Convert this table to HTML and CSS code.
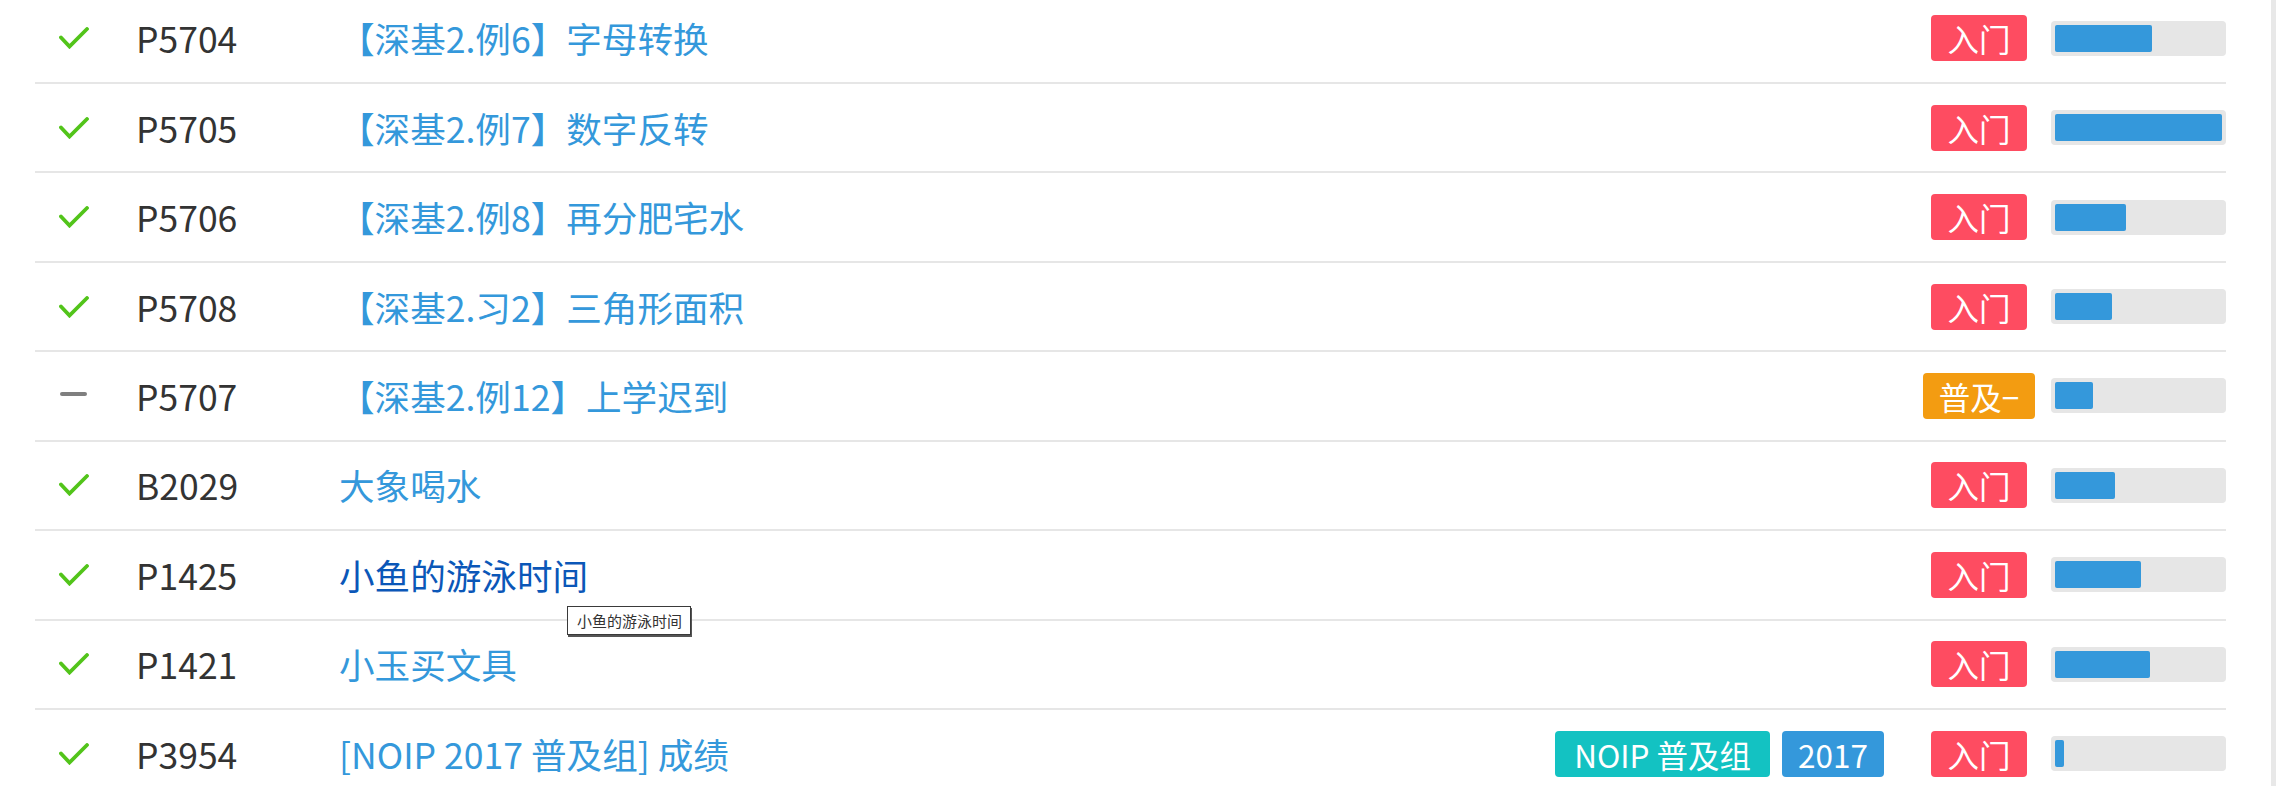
FILE: index.html
```html
<!DOCTYPE html>
<html lang="zh-CN">
<head>
<meta charset="utf-8">
<title>题目列表</title>
<link rel="stylesheet" href="styles.css">
</head>
<body>
<div class="page">
  <div class="list">
    <div class="row">
      <div class="status"><svg class="ok" viewBox="0 0 30 22"><polyline points="2,10.5 10.5,19.5 28,2"/></svg></div>
      <div class="pid">P5704</div>
      <div class="title"><a>【深基2.例6】字母转换</a></div>
      <div class="diff"><span class="badge red">入门</span></div>
      <div class="prog"><div class="fill" style="width:97px"></div></div>
    </div>
    <div class="row">
      <div class="status"><svg class="ok" viewBox="0 0 30 22"><polyline points="2,10.5 10.5,19.5 28,2"/></svg></div>
      <div class="pid">P5705</div>
      <div class="title"><a>【深基2.例7】数字反转</a></div>
      <div class="diff"><span class="badge red">入门</span></div>
      <div class="prog"><div class="fill" style="width:167px"></div></div>
    </div>
    <div class="row">
      <div class="status"><svg class="ok" viewBox="0 0 30 22"><polyline points="2,10.5 10.5,19.5 28,2"/></svg></div>
      <div class="pid">P5706</div>
      <div class="title"><a>【深基2.例8】再分肥宅水</a></div>
      <div class="diff"><span class="badge red">入门</span></div>
      <div class="prog"><div class="fill" style="width:71px"></div></div>
    </div>
    <div class="row">
      <div class="status"><svg class="ok" viewBox="0 0 30 22"><polyline points="2,10.5 10.5,19.5 28,2"/></svg></div>
      <div class="pid">P5708</div>
      <div class="title"><a>【深基2.习2】三角形面积</a></div>
      <div class="diff"><span class="badge red">入门</span></div>
      <div class="prog"><div class="fill" style="width:57px"></div></div>
    </div>
    <div class="row">
      <div class="status"><span class="dash"></span></div>
      <div class="pid">P5707</div>
      <div class="title"><a>【深基2.例12】上学迟到</a></div>
      <div class="diff"><span class="badge orange">普及−</span></div>
      <div class="prog"><div class="fill" style="width:38px"></div></div>
    </div>
    <div class="row">
      <div class="status"><svg class="ok" viewBox="0 0 30 22"><polyline points="2,10.5 10.5,19.5 28,2"/></svg></div>
      <div class="pid">B2029</div>
      <div class="title"><a>大象喝水</a></div>
      <div class="diff"><span class="badge red">入门</span></div>
      <div class="prog"><div class="fill" style="width:60px"></div></div>
    </div>
    <div class="row">
      <div class="status"><svg class="ok" viewBox="0 0 30 22"><polyline points="2,10.5 10.5,19.5 28,2"/></svg></div>
      <div class="pid">P1425</div>
      <div class="title"><a class="hover">小鱼的游泳时间</a></div>
      <div class="diff"><span class="badge red">入门</span></div>
      <div class="prog"><div class="fill" style="width:86px"></div></div>
    </div>
    <div class="row">
      <div class="status"><svg class="ok" viewBox="0 0 30 22"><polyline points="2,10.5 10.5,19.5 28,2"/></svg></div>
      <div class="pid">P1421</div>
      <div class="title"><a>小玉买文具</a></div>
      <div class="diff"><span class="badge red">入门</span></div>
      <div class="prog"><div class="fill" style="width:95px"></div></div>
    </div>
    <div class="row">
      <div class="status"><svg class="ok" viewBox="0 0 30 22"><polyline points="2,10.5 10.5,19.5 28,2"/></svg></div>
      <div class="pid">P3954</div>
      <div class="title"><a>[NOIP 2017 普及组] 成绩</a></div>
      <div class="tags"><span class="badge teal">NOIP 普及组</span><span class="badge blue">2017</span></div>
      <div class="diff"><span class="badge red">入门</span></div>
      <div class="prog"><div class="fill" style="width:9px"></div></div>
    </div>
  </div>
  <div class="gap"></div>
  <div class="edge"></div>
</div>
<div class="tooltip">小鱼的游泳时间</div>
</body>
</html>
```

FILE: styles.css
```css
html, body {
  margin: 0;
  padding: 0;
  overflow: hidden;
  background: #fff;
}
body {
  position: relative;
  font-family: "Noto Sans CJK SC", "Noto Sans", sans-serif;
  height: 786px;
}
.page {
  display: flex;
  height: 786px;
}
.list {
  margin-left: 35px;
  width: 2191px;
  margin-top: -5.43px;
}
.gap {
  flex: 1;
}
.edge {
  width: 5px;
  background: #e8e8e8;
}
.row {
  display: flex;
  align-items: center;
  height: 89.43px;
  box-sizing: border-box;
  border-bottom: 2px solid #e6e6e6;
}
.status {
  width: 76px;
  display: flex;
  justify-content: center;
  align-items: center;
}
.ok {
  width: 30px;
  height: 22px;
  margin-left: 1px;
}
.ok polyline {
  fill: none;
  stroke: #52c41a;
  stroke-width: 3.8;
  stroke-linecap: round;
  stroke-linejoin: miter;
}
.dash {
  display: block;
  width: 27px;
  height: 4px;
  border-radius: 2px;
  background: #7f7f7f;
  margin-top: -3px;
}
.pid {
  margin-left: 25px;
  width: 203px;
  font-size: 35.5px;
  color: #333;
  line-height: 50px;
}
.title {
  flex: 1;
  font-size: 35.6px;
  line-height: 50px;
}
.title a {
  color: #3498db;
}
.title a.hover {
  color: #0b57b8;
}
.tags {
  display: flex;
  gap: 12px;
  margin-right: 23px;
}
.diff {
  width: 144px;
  display: flex;
  justify-content: center;
}
.badge {
  display: inline-block;
  height: 46px;
  line-height: 46px;
  padding: 0 16px;
  border-radius: 4px;
  font-size: 31.5px;
  color: #fff;
  white-space: nowrap;
}
.red { background: #fe4c61; }
.orange { background: #f39c11; }
.teal { background: #13c2c2; padding: 0 19px; }
.blue { background: #3498db; }
.prog {
  width: 175px;
  height: 35px;
  box-sizing: border-box;
  padding: 4px;
  background: #e6e6e6;
  border-radius: 4px;
}
.fill {
  height: 27px;
  background: #3498db;
  border-radius: 2px;
}
.tooltip {
  position: absolute;
  left: 567px;
  top: 606px;
  width: 124px;
  height: 29px;
  box-sizing: border-box;
  border: 1px solid #3a3a3a;
  box-shadow: 1px 2px 0 #555;
  background: #fff;
  color: #333;
  font-size: 15px;
  line-height: 27px;
  padding-left: 9px;
}
```
